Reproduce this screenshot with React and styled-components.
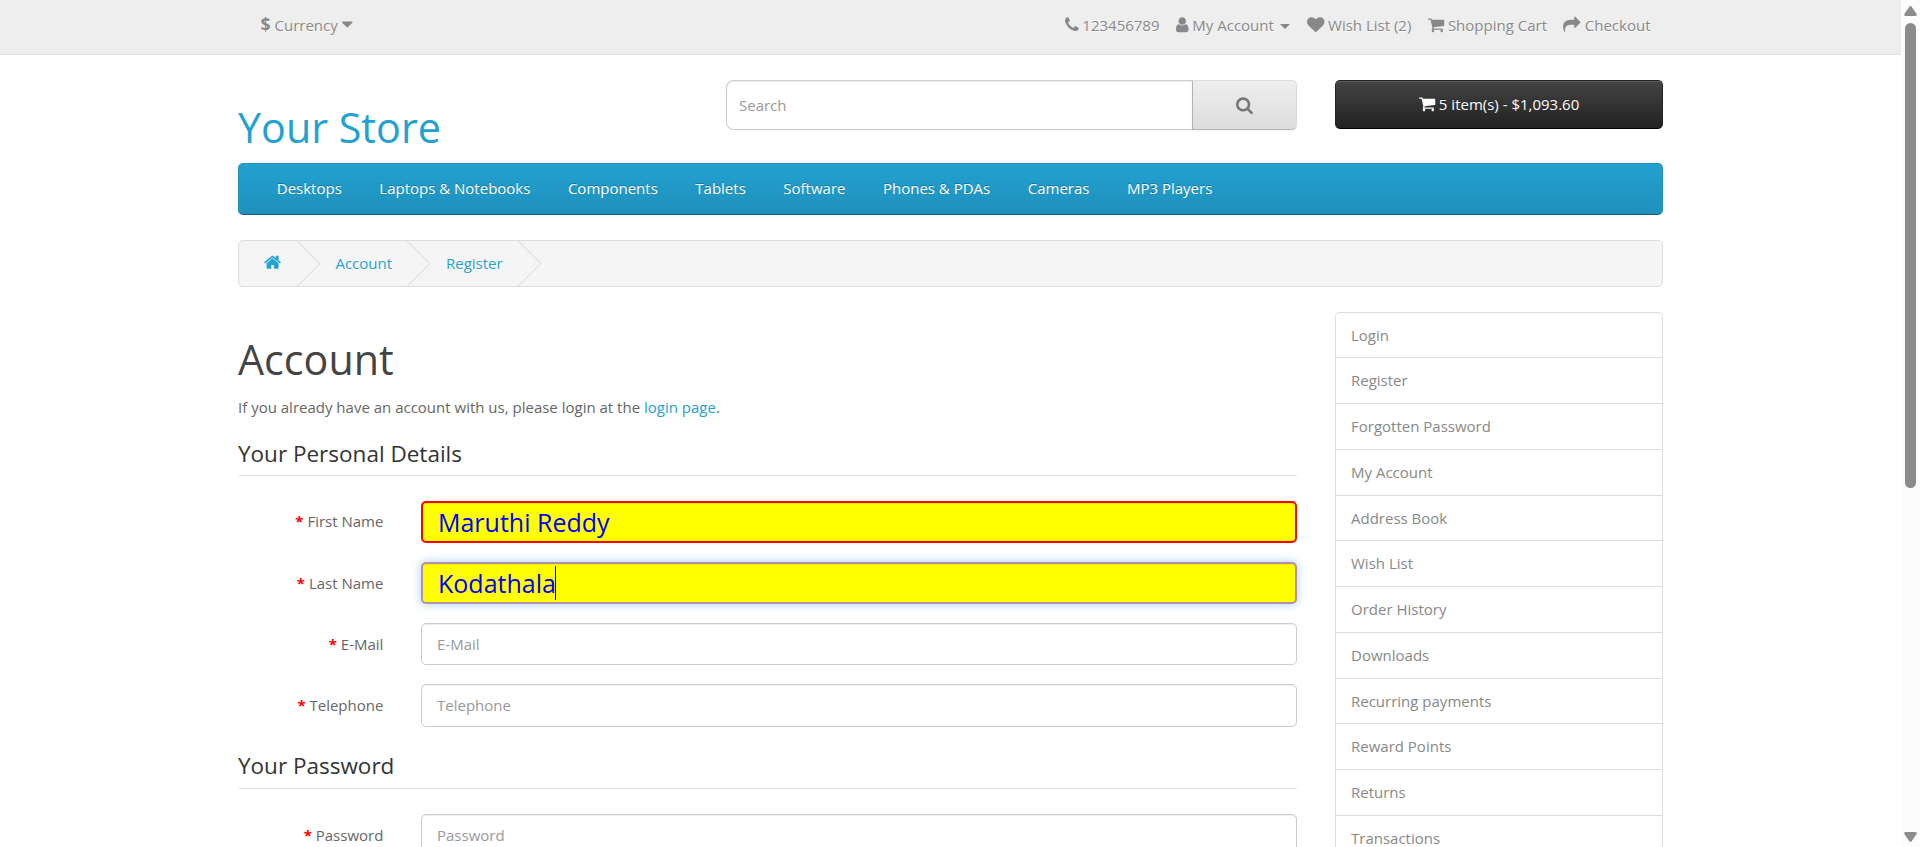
import React from "react";
import styled, { createGlobalStyle, css } from "styled-components";

const GlobalStyle = createGlobalStyle`
  *, *::before, *::after { box-sizing: border-box; }
  html, body { margin: 0; padding: 0; height: 100%; overflow: hidden; }
  body {
    background: #fff;
    color: #666;
    font: 400 15px/25px "Open Sans", sans-serif;
  }
  a { color: #23a1d1; text-decoration: none; }
`;

const Window = styled.div`
  display: flex;
  width: 1920px;
  height: 847px;
  overflow: hidden;
`;

const Page = styled.div`
  width: 1901px;
  height: 847px;
  overflow: hidden;
`;

const Container = styled.div`
  width: 1425px;
  margin: 0 auto;
`;

/* Icons */

const ICONS = {
  phone: [192, 1408, "M1600 1240q0 27-10 70.5t-21 68.5q-21 50-122 106-94 51-186 51-27 0-53-3.5t-57.5-12.5-47-14.5-55.5-20.5-49-18q-98-35-175-83-127-79-264-216t-216-264q-48-77-83-175-3-9-18-49t-20.5-55.5-14.5-47-12.5-57.5-3.5-53q0-92 51-186 56-101 106-122 25-11 68.5-21t70.5-10q14 0 21 3 18 6 53 76 11 19 30 54t35 63.5 31 53.5q3 4 17.5 25t21.5 35.5 7 28.5q0 20-28.5 50t-62 55-62 53-28.5 46q0 9 5 22.5t8.5 20.5 14 24 11.5 19q76 137 174 235t235 174q2 1 19 11.5t24 14 20.5 8.5 22.5 5q18 0 46-28.5t53-62 55-62 50-28.5q14 0 28.5 7t35.5 21.5 25 17.5q25 15 53.5 31t63.5 35 54 30q70 35 76 53 3 7 3 21z"],
  user: [256, 1280, "M1536 1399q0 109-62.5 187t-150.5 78h-854q-88 0-150.5-78t-62.5-187q0-85 8.5-160.5t31.5-152 58.5-131 94-89 134.5-34.5q131 128 313 128t313-128q76 0 134.5 34.5t94 89 58.5 131 31.5 152 8.5 160.5zm-256-887q0 159-112.5 271.5t-271.5 112.5-271.5-112.5-112.5-271.5 112.5-271.5 271.5-112.5 271.5 112.5 112.5 271.5z"],
  heart: [0, 1792, "M896 1664q-26 0-44-18l-624-602q-10-8-27.5-26t-55.5-65.5-68-97.5-53.5-121-23.5-138q0-220 127-344t351-124q62 0 126.5 21.5t120 58 95.5 68.5 76 68q36-36 76-68t95.5-68.5 120-58 126.5-21.5q224 0 351 124t127 344q0 221-229 450l-623 600q-18 18-44 18z"],
  cart: [64, 1664, "M704 1536q0 52-38 90t-90 38-90-38-38-90 38-90 90-38 90 38 38 90zm896 0q0 52-38 90t-90 38-90-38-38-90 38-90 90-38 90 38 38 90zm128-1088v512q0 24-16.5 42.5t-40.5 21.5l-1044 122q13 60 13 70 0 16-24 64h920q26 0 45 19t19 45-19 45-45 19h-1024q-26 0-45-19t-19-45q0-11 8-31.5t16-36 21.5-40 15.5-29.5l-177-823h-204q-26 0-45-19t-19-45 19-45 45-19h256q16 0 28.5 6.5t19.5 15.5 13 24.5 8 26 5.5 29.5 4.5 26h1201q26 0 45 19t19 45z"],
  share: [0, 1792, "M1792 640q0 26-19 45l-512 512q-19 19-45 19t-45-19-19-45v-256h-224q-98 0-175.5 6t-154 21.5-133 42.5-105.5 69.5-80 101-48.5 138.5-17.5 181q0 55 5 123 0 6 2.5 23.5t2.5 26.5q0 15-8.5 25t-23.5 10q-16 0-28-17-7-9-13-22t-13.5-30-10.5-24q-127-285-127-451 0-199 53-333 162-403 875-403h224v-256q0-26 19-45t45-19 45 19l512 512q19 19 19 45z"],
  search: [64, 1664, "M1216 832q0-185-131.5-316.5t-316.5-131.5-316.5 131.5-131.5 316.5 131.5 316.5 316.5 131.5 316.5-131.5 131.5-316.5zm512 832q0 52-38 90t-90 38q-54 0-90-38l-343-342q-179 124-399 124-143 0-273.5-55.5t-225-150-150-225-55.5-273.5 55.5-273.5 150-225 225-150 273.5-55.5 273.5 55.5 225 150 150 225 55.5 273.5q0 220-124 399l343 343q37 37 37 90z"],
  home: [64, 1664, "M1472 992v480q0 26-19 45t-45 19h-384v-384h-256v384h-384q-26 0-45-19t-19-45v-480q0-1 .5-3t.5-3l575-474 575 474q1 2 1 6zm223-69l-62 74q-8 9-21 11h-3q-13 0-21-7l-692-577-692 577q-12 8-24 7-13-2-21-11l-62-74q-8-10-7-23.5t11-21.5l719-599q32-26 76-26t76 26l244 204v-195q0-14 9-23t23-9h192q14 0 23 9t9 23v408l219 182q10 8 11 21.5t-7 23.5z"],
  caret: [384, 1024, "M1408 704q0 26-19 45l-448 448q-19 19-45 19t-45-19l-448-448q-19-19-19-45t19-45 45-19h896q26 0 45 19t19 45z"],
};

const Glyph = styled.svg`
  height: ${(p) => p.$size}px;
  width: ${(p) => (p.$advance * p.$size) / 1792}px;
  vertical-align: -2.5px;
  fill: currentColor;
  overflow: visible;
`;

function Icon({ name, size = 17.5 }) {
  const [x, advance, d] = ICONS[name];
  return (
    <Glyph $advance={advance} $size={size} viewBox={`${x} 0 ${advance} 1792`} aria-hidden="true">
      <path d={d} />
    </Glyph>
  );
}

/* Top bar */

const TopBar = styled.nav`
  height: 55px;
  background: #eee;
  border-bottom: 1px solid #e2e2e2;
  color: #888;
  text-shadow: 0 1px 0 #fff;
`;

const TopInner = styled(Container)`
  display: flex;
  justify-content: space-between;
  padding: 12.5px 12.5px 0 22.6px;
`;

const Currency = styled.div`
  white-space: nowrap;

  strong {
    font-size: 17.5px;
    line-height: 1;
  }
`;

const TopLinks = styled.div`
  display: flex;
  gap: 16.4px;
  white-space: nowrap;
`;

const SmallCaret = styled.span`
  display: inline-block;
  margin-left: 2.5px;
  vertical-align: middle;
  border-top: 5px solid;
  border-left: 5px solid transparent;
  border-right: 5px solid transparent;
`;

/* Header */

const Header = styled(Container)`
  display: grid;
  grid-template-columns: 488px 571px 328px;
  height: 108px;
  padding-top: 25px;
`;

const Logo = styled.h1`
  margin: 25px 0 0;
  font-size: 41.25px;
  font-weight: 400;
  line-height: 45px;
  color: #23a1d1;
`;

const SearchGroup = styled.div`
  display: flex;
  height: 50px;
`;

const SearchField = styled.div`
  flex: 1;
  padding: 12px;
  border: 1px solid #ccc;
  border-right: 0;
  border-radius: 7.5px 0 0 7.5px;
  box-shadow: inset 0 1px 1px rgba(0, 0, 0, 0.075);
  color: #999;
`;

const SearchButton = styled.div`
  width: 105px;
  border: 1px solid;
  border-color: #ddd #ddd #b3b3b3 #b3b3b3;
  border-radius: 0 5px 5px 0;
  background: linear-gradient(#eee, #ddd);
  box-shadow: 0 1px 2px rgba(0, 0, 0, 0.05);
  color: #777;
  text-align: center;
  line-height: 50px;
`;

const CartButton = styled.div`
  width: 328px;
  height: 49px;
  margin-left: 38px;
  border: 1px solid;
  border-color: #222 #222 #000;
  border-radius: 5px;
  background: linear-gradient(#444, #222);
  box-shadow: inset 0 1px 0 rgba(255, 255, 255, 0.15);
  color: #fff;
  text-align: center;
  text-shadow: 0 -1px 0 rgba(0, 0, 0, 0.25);
  line-height: 47px;
`;

/* Navigation */

const Menu = styled(Container)`
  display: flex;
  height: 52px;
  padding: 12px 19px 0;
  border: 1px solid;
  border-color: #1f90bb #1f90bb #145e7a;
  border-radius: 5px;
  background: linear-gradient(#23a1d1, #1f90bb);
`;

const MenuItem = styled.div`
  padding: 0 18.75px;
  color: #fff;
  text-shadow: 0 -1px 0 rgba(0, 0, 0, 0.25);
  white-space: nowrap;
`;

const Breadcrumb = styled(Container)`
  display: flex;
  gap: 3.9px;
  height: 47px;
  margin-top: 25px;
  padding-left: 0.4px;
  border: 1px solid #ddd;
  border-radius: 5px;
  background: #f5f5f5;
  overflow: hidden;
`;

const Crumb = styled.div`
  position: relative;
  padding: 9.5px 25px 0;
  color: #23a1d1;
  text-shadow: 0 1px 0 #fff;

  &::after {
    content: "";
    position: absolute;
    top: 6px;
    right: -6.6px;
    width: 32.5px;
    height: 32.5px;
    border-top: 1px solid #ddd;
    border-right: 1px solid #ddd;
    transform: rotate(45deg);
  }
`;

/* Body */

const Columns = styled(Container)`
  display: grid;
  grid-template-columns: 1059px 328px;
  justify-content: space-between;
  margin-top: 25px;
`;

const PageTitle = styled.h1`
  margin: 25px 0 12.5px;
  font-size: 41.25px;
  font-weight: 400;
  line-height: 45px;
  color: #444;
`;

const Intro = styled.p`
  margin: 0 0 12.7px;
`;

const Legend = styled.h2`
  margin: 0 0 25px;
  padding: ${(p) => (p.$first ? "6px 0 4.6px" : "4.7px 0 5.9px")};
  border-bottom: 1px solid #e5e5e5;
  font-size: 22.5px;
  font-weight: 400;
  line-height: 32px;
  color: #333;
`;

const Row = styled.div`
  display: grid;
  grid-template-columns: 145.4px 876px;
  column-gap: 37.6px;
  height: 42.4px;
  margin-bottom: 18.75px;
`;

const Label = styled.label`
  padding-top: 8.6px;
  text-align: right;

  &::before {
    content: "* ";
    color: #f00;
    font-weight: 700;
  }
`;

const filled = css`
  border: 2px solid ${(p) => (p.$focused ? "#b68fb0" : "#f00")};
  background: #ff0;
  color: #00f;
  font-size: 25px;
  line-height: 38.2px;
`;

const Field = styled.div`
  display: flex;
  align-items: flex-start;
  height: 42.4px;
  padding: 0 15px;
  border: 1px solid #ccc;
  border-radius: 5px;
  color: #999;
  line-height: 41.2px;
  box-shadow: inset 0 1px 1px rgba(0, 0, 0, 0.075)
    ${(p) => p.$focused && ", 0 0 10px rgba(102, 175, 233, 0.6)"};
  ${(p) => p.$filled && filled}
`;

const TextCursor = styled.span`
  width: 1px;
  height: 34px;
  margin: 2px 0 0 -0.8px;
  background: #000;
`;

const SideMenu = styled.aside`
  border: 1px solid #ddd;
  border-bottom: 0;
  border-radius: 5px 5px 0 0;
`;

const SideItem = styled.div`
  height: 45.75px;
  padding: 9.9px 15px 0;
  border-bottom: 1px solid #ddd;
  color: #888;

  &:first-child {
    height: 45.4px;
    padding-top: 9.6px;
  }
`;

/* Scrollbar */

const Scrollbar = styled.div`
  display: flex;
  flex-direction: column;
  align-items: center;
  width: 19px;
  height: 847px;
  padding: 6px 0 5px;
  background: #fcfcfc;
`;

const Thumb = styled.div`
  width: 11px;
  height: 465px;
  margin: 7px 0 auto;
  border-radius: 6px;
  background: #8b8b8b;
`;

const Arrow = styled.svg`
  width: 13px;
  height: 10px;
  fill: #8b8b8b;
  ${(p) => p.$down && "transform: rotate(180deg);"}
`;

const ARROW = "M5.2 .9Q6.5-.7 7.8.9L12.6 7.9Q13.4 9.7 11.6 10H1.4Q-.4 9.7.4 7.9Z";

const MENU = ["Desktops", "Laptops & Notebooks", "Components", "Tablets", "Software", "Phones & PDAs", "Cameras", "MP3 Players"];
const SIDE = ["Login", "Register", "Forgotten Password", "My Account", "Address Book", "Wish List", "Order History", "Downloads", "Recurring payments", "Reward Points", "Returns", "Transactions"];

export default function App() {
  return (
    <Window>
      <GlobalStyle />
      <Page>
        <TopBar>
          <TopInner>
            <Currency><strong>$</strong> Currency <Icon name="caret" size={18.5} /></Currency>
            <TopLinks>
              <span><Icon name="phone" /> 123456789</span>
              <span><Icon name="user" /> My Account <SmallCaret /></span>
              <span><Icon name="heart" /> Wish List (2)</span>
              <span><Icon name="cart" /> Shopping Cart</span>
              <span><Icon name="share" /> Checkout</span>
            </TopLinks>
          </TopInner>
        </TopBar>

        <Header as="header">
          <Logo>Your Store</Logo>
          <SearchGroup>
            <SearchField>Search</SearchField>
            <SearchButton><Icon name="search" size={18.2} /></SearchButton>
          </SearchGroup>
          <CartButton><Icon name="cart" /> 5 item(s) - $1,093.60</CartButton>
        </Header>

        <Menu as="nav">
          {MENU.map((m) => <MenuItem key={m}>{m}</MenuItem>)}
        </Menu>

        <Breadcrumb>
          <Crumb><Icon name="home" size={18.5} /></Crumb>
          <Crumb>Account</Crumb>
          <Crumb>Register</Crumb>
        </Breadcrumb>

        <Columns>
          <main>
            <PageTitle>Account</PageTitle>
            <Intro>If you already have an account with us, please login at the <a href="#login">login page</a>.</Intro>
            <Legend $first>Your Personal Details</Legend>
            <Row><Label>First Name</Label><Field $filled>Maruthi Reddy</Field></Row>
            <Row><Label>Last Name</Label><Field $filled $focused>Kodathala<TextCursor /></Field></Row>
            <Row><Label>E-Mail</Label><Field>E-Mail</Field></Row>
            <Row><Label>Telephone</Label><Field>Telephone</Field></Row>
            <Legend>Your Password</Legend>
            <Row><Label>Password</Label><Field>Password</Field></Row>
          </main>
          <SideMenu>
            {SIDE.map((s) => <SideItem key={s}>{s}</SideItem>)}
          </SideMenu>
        </Columns>
      </Page>
      <Scrollbar>
        <Arrow viewBox="0 0 13 10"><path d={ARROW} /></Arrow>
        <Thumb />
        <Arrow $down viewBox="0 0 13 10"><path d={ARROW} /></Arrow>
      </Scrollbar>
    </Window>
  );
}
